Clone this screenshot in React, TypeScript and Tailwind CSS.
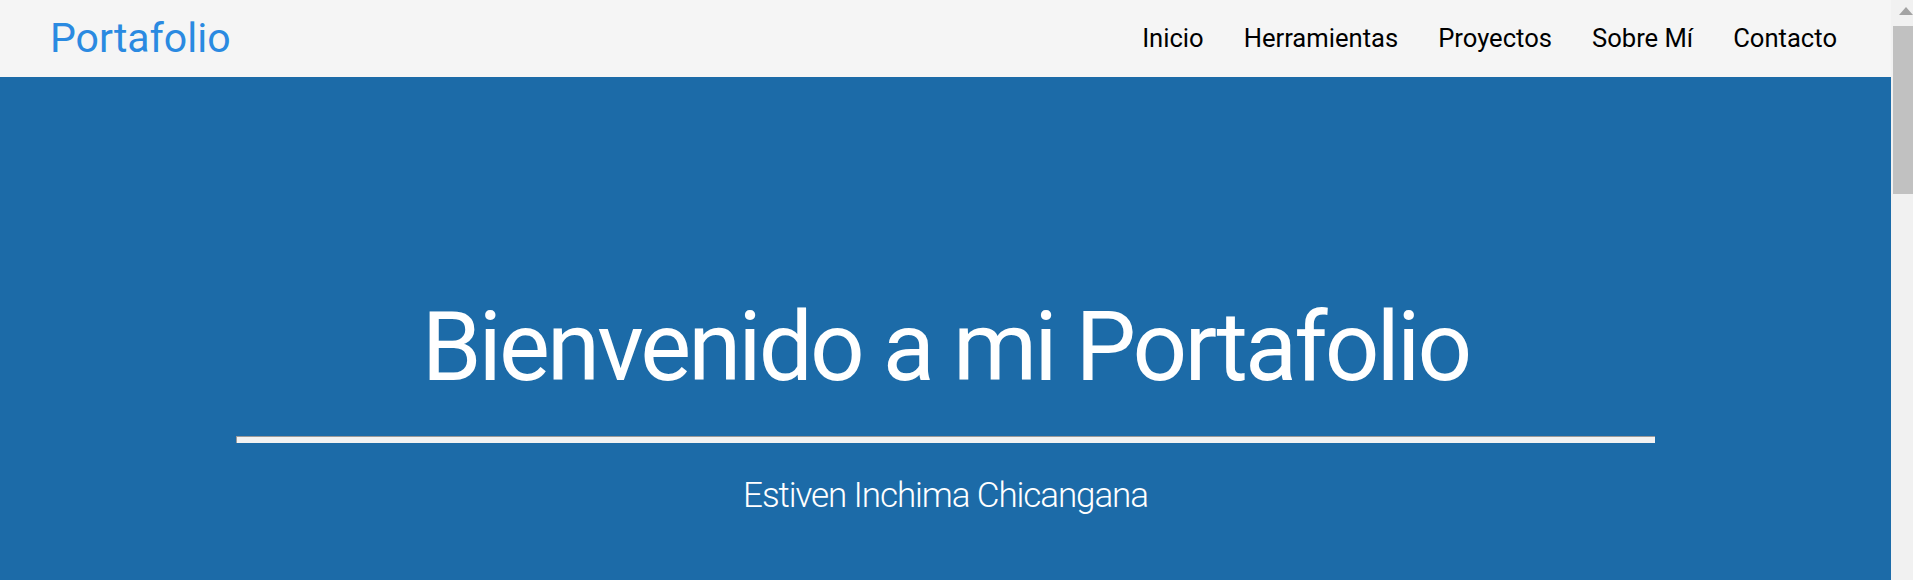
import React from 'react';

const links = ['Inicio', 'Herramientas', 'Proyectos', 'Sobre Mí', 'Contacto'];

const App = () => {
  return (
    <div className="flex h-[580px] w-full overflow-hidden font-['Roboto',sans-serif]">
      <div className="flex flex-1 flex-col">
        {/* Header */}
        <header className="flex h-[77px] shrink-0 items-center justify-between bg-[#f5f5f5] pl-[50px] pr-[54px]">
          <a className="text-[41px] font-normal leading-none text-[#2a8ae1]">Portafolio</a>
          <nav className="flex items-center gap-[40px]">
            {links.map((l) => (
              <a key={l} className="text-[25.6px] leading-none text-black">
                {l}
              </a>
            ))}
          </nav>
        </header>

        {/* Hero */}
        <main className="flex flex-1 flex-col items-center bg-[#1c6ba8] pt-[222px] text-white">
          <h1 className="text-[96px] font-normal leading-none tracking-[-2.9px]">Bienvenido a mi Portafolio</h1>
          <hr className="mt-[41px] h-[7px] w-3/4 border-0 border-l border-t border-[#9a9a9a] bg-[#f2f2f2]" />
          <p className="mt-[35px] text-[35px] font-light leading-none tracking-[-1.1px]">Estiven Inchima Chicangana</p>
        </main>
      </div>

      {/* Scrollbar */}
      <div className="flex w-[22px] shrink-0 flex-col bg-[#f1f1f1]">
        <div className="ml-[8px] mt-[7px] h-0 w-0 border-x-[7px] border-b-[8px] border-x-transparent border-b-[#a3a3a3]" />
        <div className="ml-[2px] mt-[11px] h-[168px] bg-[#c1c1c1]" />
      </div>
    </div>
  );
};

export default App;
